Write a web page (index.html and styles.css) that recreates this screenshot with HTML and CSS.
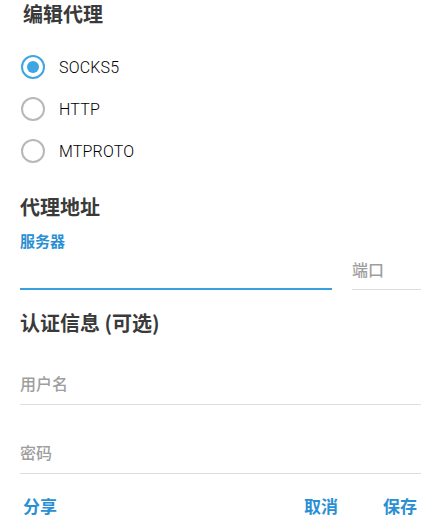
FILE: index.html
```html
<!DOCTYPE html>
<html lang="zh">
<head>
<meta charset="utf-8">
<title>编辑代理</title>
<link rel="stylesheet" href="styles.css">
</head>
<body>
<div class="dialog">
  <h1 class="title">编辑代理</h1>
  <div class="radios">
    <div class="radio-row"><span class="radio checked"></span><span class="radio-label">SOCKS5</span></div>
    <div class="radio-row"><span class="radio"></span><span class="radio-label">HTTP</span></div>
    <div class="radio-row"><span class="radio"></span><span class="radio-label">MTPROTO</span></div>
  </div>
  <h2 class="heading heading-addr">代理地址</h2>
  <div class="addr-row">
    <div class="field-server">
      <div class="float-label">服务器</div>
      <div class="server-input"></div>
    </div>
    <div class="field-port">
      <div class="placeholder">端口</div>
    </div>
  </div>
  <h2 class="heading heading-auth">认证信息 (可选)</h2>
  <div class="field">
    <div class="placeholder">用户名</div>
  </div>
  <div class="field">
    <div class="placeholder">密码</div>
  </div>
  <div class="buttons">
    <span class="btn">分享</span>
    <span class="spacer"></span>
    <span class="btn">取消</span>
    <span class="btn btn-save">保存</span>
  </div>
</div>
</body>
</html>
```

FILE: styles.css
```css
html, body {
  margin: 0;
  padding: 0;
  background: #ffffff;
}
body {
  font-family: "Roboto", "Noto Sans CJK SC", sans-serif;
  width: 442px;
  height: 532px;
  overflow: hidden;
}
.dialog {
  padding: 0 21px 0 20px;
}
.title {
  margin: 0;
  padding: 1px 0 0 3px;
  font-family: "Noto Sans CJK SC", sans-serif;
  font-size: 20px;
  line-height: 25px;
  font-weight: 700;
  color: #3a3a3a;
}
.radios {
  margin-top: 20px;
}
.radio-row {
  height: 42px;
  display: flex;
  align-items: center;
  padding-left: 1px;
}
.radio {
  width: 24px;
  height: 24px;
  box-sizing: border-box;
  border: 2px solid #b8b8b8;
  border-radius: 50%;
  display: flex;
  align-items: center;
  justify-content: center;
}
.radio.checked {
  border-color: #3fa6e4;
}
.radio.checked::after {
  content: "";
  width: 12px;
  height: 12px;
  border-radius: 50%;
  background: #3fa6e4;
}
.radio-label {
  margin-left: 14px;
  font-size: 16px;
  font-weight: 300;
  color: #000000;
  letter-spacing: 0.2px;
}
.heading {
  margin: 0;
  font-family: "Noto Sans CJK SC", sans-serif;
  font-size: 20px;
  line-height: 26px;
  font-weight: 700;
  color: #3a3a3a;
}
.heading-addr {
  margin-top: 22px;
}
.addr-row {
  margin-top: 11px;
  display: flex;
  align-items: flex-end;
  gap: 20px;
}
.field-server {
  width: 312px;
  flex: none;
}
.float-label {
  font-family: "Noto Sans CJK SC", sans-serif;
  font-size: 15px;
  line-height: 20px;
  font-weight: 700;
  color: #2b8fd4;
}
.server-input {
  height: 37px;
  border-bottom: 2px solid #3a9fdd;
}
.field-port {
  flex: 1;
  padding-bottom: 10px;
  border-bottom: 1px solid #dedede;
}
.placeholder {
  font-family: "Noto Sans CJK SC", sans-serif;
  font-size: 16px;
  line-height: 20px;
  font-weight: 500;
  color: #9e9e9e;
}
.heading-auth {
  margin-top: 19px;
  line-height: 27px;
}
.field {
  padding-top: 37px;
  padding-bottom: 11px;
  border-bottom: 1px solid #dedede;
}
.buttons {
  margin-top: 21px;
  display: flex;
  align-items: center;
  padding: 0 4px 0 3px;
}
.btn {
  font-family: "Noto Sans CJK SC", sans-serif;
  font-size: 17px;
  line-height: 22px;
  font-weight: 700;
  color: #2b8fd4;
}
.spacer {
  flex: 1;
}
.btn-save {
  margin-left: 45px;
}
```
